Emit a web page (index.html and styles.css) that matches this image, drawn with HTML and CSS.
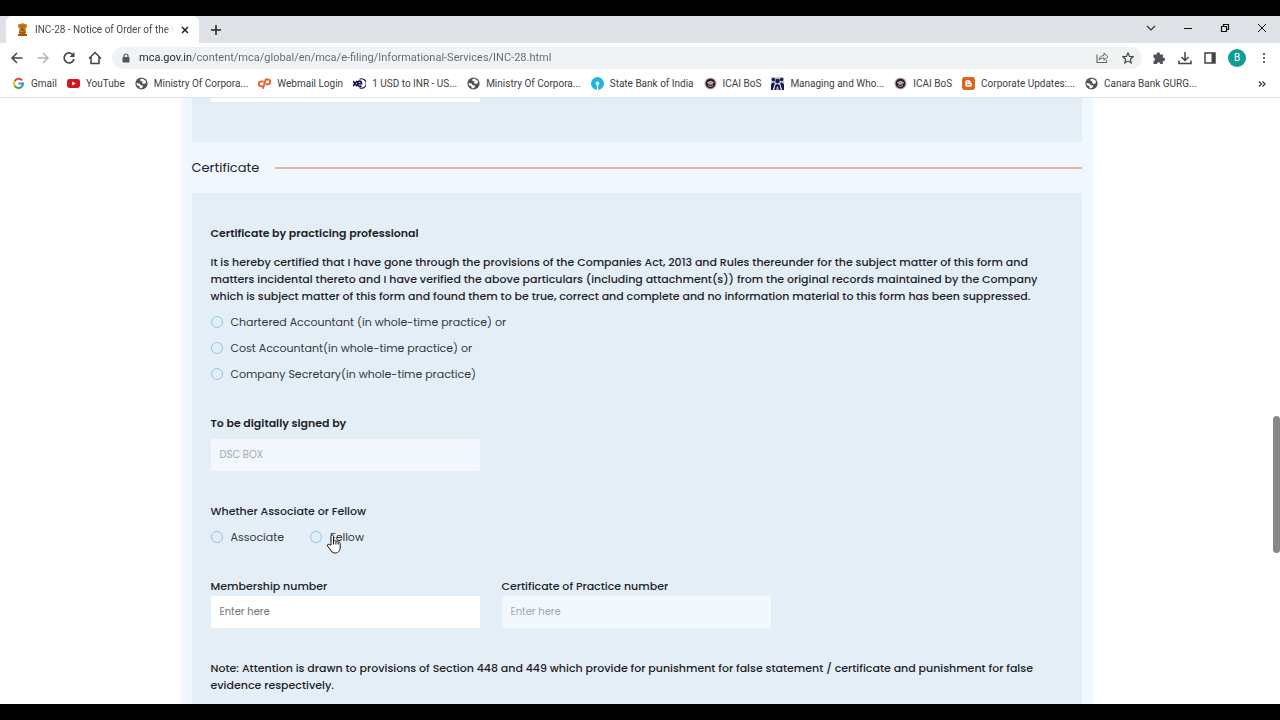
FILE: index.html
```
<!DOCTYPE html>
<html lang="en">
<head>
  <meta charset="UTF-8">
  <meta name="viewport" content="width=device-width, initial-scale=1.0">
  <title>INC-28 - Notice of Order of the Court</title>
  <link rel="stylesheet" href="styles.css">
</head>
<body>
  <!-- shared icons -->
  <svg class="sprite" aria-hidden="true">
    <symbol id="globe" viewBox="0 0 16 16">
      <circle cx="8" cy="8" r="7.5" fill="#505458"/>
      <path d="M6 3.500L9 1.800 13.500 5 13 8 10.500 8.500 8.500 7 9.500 5.500 7 5z" fill="#fff"/>
      <path d="M1.800 7.500L5.500 8 7 10l3 .5-.5 2L7 14.200 5.500 13 5.500 11.500 2.500 10z" fill="#fff"/>
    </symbol>
    <symbol id="icai" viewBox="0 0 16 16">
      <circle cx="8" cy="8" r="7.500" fill="#c9a7a9"/>
      <circle cx="8" cy="8" r="6" fill="#251d33"/>
      <path d="M3.500 6.500L8 4.500l4.500 2-2.500 3H6z" fill="#b9a28f"/>
      <path d="M5 10.500c2 1.500 4 1.500 6 0" fill="none" stroke="#e8d8cf" stroke-width="1"/>
    </symbol>
  </svg>

  <div class="browser">
    <div class="tabstrip">
      <div class="tab">
        <svg class="tab-icon" viewBox="0 0 12 14">
          <path d="M2 1h2l2-1 2 1h2l1 2-1 3H9l1 3H2l1-3H2L1 3z" fill="#c77a1c"/>
          <path d="M2 9h8v2H2zM1 12h10v2H1zM3 11h6v1H3z" fill="#a55a12"/>
          <path d="M4 3h1M7 3h1M5 5.500h2M4 7.500h4" stroke="#6e3c0c"/>
        </svg>
        <span class="tab-title">INC-28 - Notice of Order of the C</span>
        <button class="icon-btn" aria-label="Close tab"><svg viewBox="0 0 8 8" width="8" height="8"><path d="M1 1l6 6M7 1L1 7" stroke="#222" stroke-width="1.500"/></svg></button>
      </div>
      <button class="icon-btn new-tab" aria-label="New tab"><svg viewBox="0 0 10 10" width="10" height="10"><path d="M5 0v10M0 5h10" stroke="#222" stroke-width="1.500"/></svg></button>
      <div class="window-buttons">
        <button class="icon-btn" aria-label="Search tabs"><svg viewBox="0 0 10 10" width="10" height="10"><path d="M1 3l4 4 4-4" fill="none" stroke="#333" stroke-width="1.200"/></svg></button>
        <button class="icon-btn" aria-label="Minimize"><svg viewBox="0 0 10 10" width="10" height="10"><path d="M1 5.500h8" stroke="#111"/></svg></button>
        <button class="icon-btn" aria-label="Restore"><svg viewBox="0 0 10 10" width="10" height="10"><path d="M1.500 3.500h5v5h-5zM3.500 3V1.500h5v5H7" fill="none" stroke="#111" stroke-width="1.200"/></svg></button>
        <button class="icon-btn" aria-label="Close window"><svg viewBox="0 0 10 10" width="10" height="10"><path d="M1 1l8 8M9 1L1 9" stroke="#111"/></svg></button>
      </div>
    </div>

    <div class="toolbar">
      <div class="nav-buttons">
        <button class="icon-btn" aria-label="Back"><svg viewBox="0 0 14 14" width="14" height="14"><path d="M12.500 7H2M7 2L2 7l5 5" fill="none" stroke="#444" stroke-width="1.500"/></svg></button>
        <button class="icon-btn" aria-label="Forward"><svg viewBox="0 0 14 14" width="14" height="14"><path d="M1.500 7H12M7 2l5 5-5 5" fill="none" stroke="#b4b4b4" stroke-width="1.500"/></svg></button>
        <button class="icon-btn" aria-label="Reload"><svg viewBox="0 0 14 14" width="14" height="14"><path d="M11.500 4.500A5 5 0 1 0 12 8" fill="none" stroke="#444" stroke-width="1.600"/><path d="M12.500 1v5h-5z" fill="#444"/></svg></button>
        <button class="icon-btn" aria-label="Home"><svg viewBox="0 0 14 14" width="14" height="14"><path d="M1 7.500L7 1.500l6 6M3 6v6.500h8V6" fill="none" stroke="#444" stroke-width="1.500"/></svg></button>
      </div>
      <div class="address">
        <svg viewBox="0 0 8 10" width="8" height="10"><path d="M2 4.500V3a2 2 0 0 1 4 0v1.500" fill="none" stroke="#505458" stroke-width="1.200"/><rect x="0.500" y="4" width="7" height="5.500" rx="0.800" fill="#505458"/></svg>
        <input class="url" type="text" aria-label="Address" value="mca.gov.in/content/mca/global/en/mca/e-filing/Informational-Services/INC-28.html">
        <button class="icon-btn" aria-label="Share"><svg viewBox="0 0 13 13" width="13" height="13"><path d="M1 3.500v8h9.500V9" fill="none" stroke="#666" stroke-width="1.100"/><path d="M3 9c.5-3 2.500-4.500 5-4.500V2l4 3.700-4 3.500V7C6 7 4.500 7.500 3 9z" fill="none" stroke="#666" stroke-linejoin="round"/></svg></button>
        <button class="icon-btn" aria-label="Bookmark this tab"><svg viewBox="0 0 12 12" width="12" height="12"><path d="M6 1l1.500 3.400 3.700.4-2.800 2.500.8 3.600L6 9.100l-3.200 1.800.8-3.600L.8 4.800l3.700-.4z" fill="none" stroke="#444" stroke-width="1.200"/></svg></button>
      </div>
      <div class="tools">
        <button class="icon-btn" aria-label="Extensions"><svg viewBox="0 0 14 14" width="14" height="14"><path d="M1.500 3.500h3.200a1.700 1.700 0 1 1 3.200 0h3v3.200a1.700 1.700 0 1 1 0 3.200v3H8.200a1.600 1.600 0 1 0-3.200 0H1.500V9.700a1.500 1.500 0 1 0 0-3z" fill="#505458"/></svg></button>
        <button class="icon-btn" aria-label="Downloads"><svg viewBox="0 0 14 14" width="14" height="14"><path d="M7 1v8M3.500 6L7 9.500 10.500 6M1 9.500v3h12v-3" fill="none" stroke="#444" stroke-width="1.500"/></svg></button>
        <button class="icon-btn" aria-label="Side panel"><svg viewBox="0 0 12 12" width="12" height="12"><rect x="1" y="1" width="10" height="10" fill="none" stroke="#444" stroke-width="1.500"/><path d="M7.500 1H11v10H7.500z" fill="#444"/></svg></button>
        <button class="icon-btn profile" aria-label="Profile B">B</button>
        <button class="icon-btn" aria-label="Menu"><svg viewBox="0 0 12 12" width="12" height="12"><g fill="#444"><circle cx="6" cy="2" r="1.100"/><circle cx="6" cy="6" r="1.100"/><circle cx="6" cy="10" r="1.100"/></g></svg></button>
      </div>
    </div>

    <nav class="bookmarks">
      <a href="#"><svg viewBox="0 0 16 16"><g fill="none" stroke-width="2.500"><path d="M12.500 4.200A5.500 5.500 0 0 0 3.300 5.200" stroke="#ea4335"/><path d="M3.300 5.200a5.500 5.500 0 0 0 0 5.600" stroke="#fbbc05"/><path d="M3.300 10.800a5.500 5.500 0 0 0 8.500 1.200" stroke="#34a853"/><path d="M11.800 12A5.500 5.500 0 0 0 13.500 8H8" stroke="#4285f4"/></g></svg>Gmail</a>
      <a href="#"><svg viewBox="0 0 16 16"><rect y="2.500" width="16" height="11" rx="3" fill="#d9121f"/><path d="M6.300 5.500v5l4.500-2.500z" fill="#fff"/></svg>YouTube</a>
      <a href="#"><svg><use href="#globe"/></svg>Ministry Of Corpora...</a>
      <a href="#"><svg viewBox="0 0 16 16"><path d="M7 5.500H4a3 3 0 0 0 0 6h1.500M6 14.500L9.500 3H12a3 3 0 0 1 0 6h-2.500" fill="none" stroke="#e6622e" stroke-width="2.400"/></svg>Webmail Login</a>
      <a href="#"><svg viewBox="0 0 16 16"><path d="M0 5l5 6.500M5 5L0 11.500M6 8.300h4.500C10.500 4 5.800 4 5.800 8.300c0 3.500 3 4 4.700 2.300" fill="none" stroke="#17135a" stroke-width="2"/><path d="M8 2.800a5.800 5.800 0 1 1 0 10.500" fill="none" stroke="#17135a" stroke-width="1.300"/></svg>1 USD to INR - US...</a>
      <a href="#"><svg><use href="#globe"/></svg>Ministry Of Corpora...</a>
      <a href="#"><svg viewBox="0 0 16 16"><circle cx="8" cy="8" r="8" fill="#20b5dc"/><circle cx="8" cy="7.800" r="2.300" fill="#fff"/><path d="M7.200 9h1.600v7H7.200z" fill="#fff"/></svg>State Bank of India</a>
      <a href="#"><svg><use href="#icai"/></svg>ICAI BoS</a>
      <a href="#"><svg viewBox="0 0 16 16"><path d="M0 0h16v16H0z" fill="#c8cbd6"/><g fill="#171d50"><circle cx="3" cy="3" r="2.200"/><circle cx="13" cy="3" r="2.200"/><circle cx="8" cy="5" r="2.800"/><path d="M0 16V9l3-2.500 2 2L2.500 16zM16 16V9l-3-2.500-2 2L13.500 16zM4 16l1-6 3-1.500L11 10l1 6z"/></g><path d="M5 9L3 16M11 9l2 7M7 16l1-4 1 4" stroke="#fff" fill="none"/></svg>Managing and Who...</a>
      <a href="#"><svg><use href="#icai"/></svg>ICAI BoS</a>
      <a href="#"><svg viewBox="0 0 16 16"><rect width="16" height="16" rx="3" fill="#d9641d"/><path d="M4 6a2 2 0 0 1 2-2h2.500a2 2 0 0 1 2 2c0 1 .3 1.300 1.500 1.500V10a2 2 0 0 1-2 2H6a2 2 0 0 1-2-2z" fill="#fff"/><path d="M6 6.500h2M6 9.500h4" stroke="#d9641d" stroke-width="1.200"/></svg>Corporate Updates:...</a>
      <a href="#"><svg><use href="#globe"/></svg>Canara Bank GURG...</a>
      <button class="icon-btn more" aria-label="More bookmarks"><svg viewBox="0 0 8 8" width="8" height="8"><path d="M1 1.500L3.500 4 1 6.500M4.500 1.500L7 4 4.500 6.500" fill="none" stroke="#333" stroke-width="1.200"/></svg></button>
    </nav>

    <div class="viewport">
      <main class="form">
        <section class="card card-prev">
          <div class="field-end"></div>
        </section>

        <h2 class="section-title">Certificate</h2>

        <section class="card">
          <h3>Certificate by practicing professional</h3>
          <p class="declaration">It is hereby certified that I have gone through the provisions of the Companies Act, 2013 and Rules thereunder for the subject matter of this form and<br>
            matters incidental thereto and I have verified the above particulars (including attachment(s)) from the original records maintained by the Company<br>
            which is subject matter of this form and found them to be true, correct and complete and no information material to this form has been suppressed.</p>
          <div class="radios">
            <label><input type="radio" name="professional">Chartered Accountant (in whole-time practice) or</label>
            <label><input type="radio" name="professional">Cost Accountant(in whole-time practice) or</label>
            <label><input type="radio" name="professional">Company Secretary(in whole-time practice)</label>
          </div>

          <div class="group signed">
            <label class="strong" for="dsc">To be digitally signed by</label>
            <input class="field" id="dsc" type="text" placeholder="DSC BOX" disabled>
          </div>

          <p class="question">Whether Associate or Fellow</p>
          <div class="radios inline">
            <label><input type="radio" name="member">Associate</label>
            <label class="hovered"><input type="radio" name="member">Fellow
              <svg class="pointer" viewBox="0 0 16 20" width="16" height="20"><path d="M5 11V2.500c0-2 2.500-2 2.500 0V7c.3-1 2.200-.8 2.400.6.500-.8 2-.5 2.200.7.600-.5 2.100-.2 2.100 1.200V13c0 3.500-1.700 6-4.900 6-3 0-4-1.500-5-3.500L1.500 12c-.8-1.500 1.200-2.300 2-1.200z" fill="#fff" stroke="#111"/><path d="M7.500 7v3.500M9.900 8v2.500M12.100 8.500v2" stroke="#111"/></svg>
            </label>
          </div>

          <div class="row">
            <div class="group">
              <label for="membership">Membership number</label>
              <input class="field" id="membership" type="text" placeholder="Enter here">
            </div>
            <div class="group">
              <label for="cop">Certificate of Practice number</label>
              <input class="field" id="cop" type="text" placeholder="Enter here" disabled>
            </div>
          </div>

          <p class="note">Note: Attention is drawn to provisions of Section 448 and 449 which provide for punishment for false statement / certificate and punishment for false<br>evidence respectively.</p>
        </section>
      </main>
      <div class="scrollbar"><div class="thumb"></div></div>
    </div>
  </div>
</body>
</html>
```
FILE: styles.css
```
* {
  margin: 0;
  padding: 0;
  box-sizing: border-box;
}
body {
  background: #000;
  padding: 16px 0;
  height: 100vh;
  font-family: Roboto, sans-serif;
  font-size: 11px;
  line-height: 17px;
  color: #1f2226;
}
.sprite {
  display: none;
}
.browser {
  display: flex;
  flex-direction: column;
  height: 100%;
  background: #fff;
}
.icon-btn {
  display: flex;
  align-items: center;
  justify-content: center;
  flex: none;
  border: 0;
  background: none;
}

/* tabs */
.tabstrip {
  display: flex;
  align-items: stretch;
  height: 27px;
  background: #dee1e6;
  padding-left: 6px;
}
.tab {
  display: flex;
  align-items: center;
  width: 193px;
  padding: 0 10px 0 11px;
  background: #fff;
  border-radius: 6px 6px 0 0;
  font-size: 10px;
  color: #45484c;
}
.tab-icon {
  width: 11px;
  height: 13px;
  flex: none;
  margin-right: 7px;
}
.tab-title {
  flex: 1;
  overflow: hidden;
  white-space: nowrap;
  margin-right: 7px;
  -webkit-mask-image: linear-gradient(to right, #000 94%, transparent);
  mask-image: linear-gradient(to right, #000 94%, transparent);
}
.new-tab {
  width: 34px;
}
.window-buttons {
  display: flex;
  margin-left: auto;
  padding-bottom: 4px;
}
.window-buttons .icon-btn {
  width: 37px;
}

/* toolbar */
.toolbar {
  display: flex;
  align-items: center;
  height: 29px;
  padding: 0 10px;
}
.nav-buttons,
.tools {
  display: flex;
  align-items: center;
  gap: 12px;
}
.address {
  flex: 1;
  display: flex;
  align-items: center;
  height: 22px;
  margin: 0 10px;
  padding: 0 8px 0 10px;
  gap: 13px;
  background: #f0f3f4;
  border-radius: 11px;
}
.url {
  flex: 1;
  min-width: 0;
  margin-left: -4px;
  border: 0;
  outline: 0;
  font: 11px Roboto, sans-serif;
  color: transparent;
  background: linear-gradient(to right, #202124 52px, #62666a 52px);
  -webkit-background-clip: text;
  background-clip: text;
}
.address svg {
  flex: none;
}
.profile {
  width: 18px;
  height: 18px;
  border-radius: 50%;
  background: #0f9d94;
  color: #fff;
  font: 10px Roboto, sans-serif;
}

/* bookmarks */
.bookmarks {
  display: flex;
  align-items: center;
  gap: 10px;
  height: 26px;
  padding: 0 14px 2px 12px;
  border-bottom: 1px solid #e3e5e7;
  font-size: 10px;
}
.bookmarks a {
  display: flex;
  align-items: center;
  gap: 6px;
  white-space: nowrap;
  color: #3c4043;
  text-decoration: none;
}
.bookmarks a svg {
  width: 13px;
  height: 13px;
  flex: none;
}
.more {
  margin-left: auto;
}

/* page */
.viewport {
  flex: 1;
  display: flex;
  min-height: 0;
  overflow: hidden;
  font-family: Poppins, Inter, sans-serif;
  font-weight: 500;
}
.form {
  width: 72%;
  max-width: 912px;
  margin: 0 auto;
  padding: 0 11px;
  background: #f0f7fe;
}
.card {
  background: #e3eef7;
  padding: 31px 19px;
}
.card-prev {
  height: 44px;
  padding-top: 0;
}
.field-end {
  width: 269px;
  height: 4px;
  background: #fff;
  border-radius: 0 0 2px 2px;
}
.section-title {
  display: flex;
  align-items: center;
  gap: 16px;
  height: 51px;
  font-size: 13px;
  font-weight: 400;
}
.section-title::after {
  content: "";
  flex: 1;
  height: 2px;
  background: #e5b7a0;
}
.card h3 {
  font-size: 11px;
  font-weight: 600;
  line-height: 18px;
}
.declaration {
  margin: 12px 0 4px;
}
.radios label {
  display: flex;
  align-items: center;
  gap: 8px;
  height: 26px;
  font-weight: 400;
  color: #34383c;
}
.radios input {
  appearance: none;
  width: 12px;
  height: 12px;
  border: 1px solid #8fc8e2;
  border-radius: 50%;
}
.radios.inline {
  display: flex;
  gap: 26px;
}
.hovered {
  position: relative;
}
.pointer {
  position: absolute;
  left: 16px;
  top: 10px;
}
.group {
  display: flex;
  flex-direction: column;
  width: 269px;
  gap: 1px;
  line-height: 18px;
}
.signed {
  margin-top: 27px;
  gap: 7px;
}
.strong {
  font-weight: 600;
}
.field {
  height: 32px;
  padding: 0 9px;
  border: 0;
  border-radius: 2px;
  background: #fff;
  font: 10px Poppins, Inter, sans-serif;
}
.field:disabled {
  background: #f2f8fd;
}
.field::placeholder {
  color: #72777b;
}
.field:disabled::placeholder {
  color: #a2a9af;
}
.question {
  margin: 31px 0 4px;
  line-height: 18px;
}
.row {
  display: flex;
  gap: 22px;
  margin-top: 27px;
}
.note {
  margin-top: 32px;
}
.scrollbar {
  width: 7px;
  padding-top: 318px;
}
.thumb {
  height: 137px;
  border-radius: 4px;
  background: #878787;
}
```
